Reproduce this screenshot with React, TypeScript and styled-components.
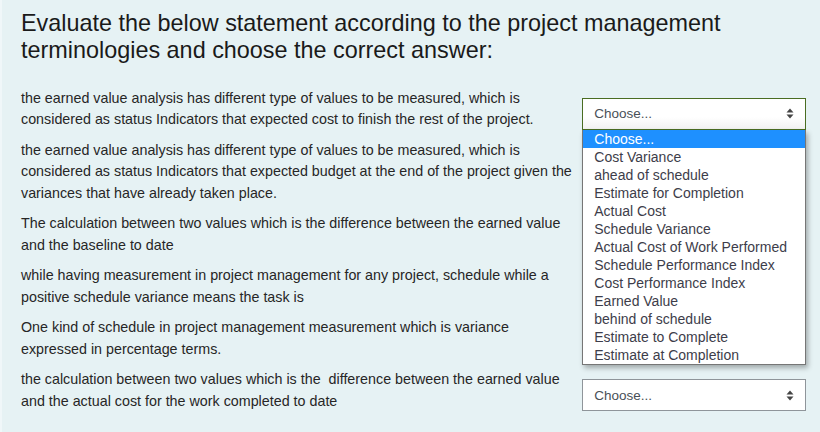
import React from 'react'
import styled, { createGlobalStyle } from 'styled-components'

const GlobalStyle = createGlobalStyle`
  html, body {
    margin: 0;
    padding: 0;
    background: #e6f2f4;
  }
  body {
    font-family: Arial, "Liberation Sans", Helvetica, sans-serif;
    color: #222;
  }
`

const Page = styled.div`
  width: 820px;
  height: 432px;
  box-sizing: border-box;
  padding: 9.5px 14px 0 19px;
  border-left: 2px solid #f0f7f9;
  overflow: hidden;
`

const Heading = styled.h2`
  margin: 0 0 24px 0;
  font-size: 23.4px;
  line-height: 27px;
  font-weight: 400;
  color: #1a1a1a;
`

const List = styled.div`
  display: flex;
  flex-direction: column;
`

const Row = styled.div`
  display: flex;
  align-items: center;
  margin-bottom: 9px;
`

const Statement = styled.div`
  width: 558px;
  margin-right: 4px;
  font-size: 14.3px;
  line-height: 21.5px;
  color: #262626;
`

const SelectWrap = styled.div`
  position: relative;
  width: 224px;
  margin-top: 9px;
`

const SelectBox = styled.div<{ $focused?: boolean }>`
  box-sizing: border-box;
  height: 32px;
  display: flex;
  align-items: center;
  justify-content: space-between;
  padding: 0 11px 0 11px;
  border: 1px solid ${(p) => (p.$focused ? '#4a6d22' : '#8f959a')};
  background: ${(p) =>
    p.$focused ? 'linear-gradient(#fff 60%, #f1f1f1)' : '#fff'};
  font-size: 13.5px;
  color: #495057;
`

const Arrows = () => (
  <svg width="8" height="11" viewBox="0 0 8 11">
    <path d="M4 0.5 L7.5 4.5 H0.5 Z" fill="#444" />
    <path d="M4 10.5 L7.5 6.5 H0.5 Z" fill="#444" />
  </svg>
)

const Dropdown = styled.ul`
  position: absolute;
  z-index: 5;
  top: 32px;
  left: 0;
  width: 224px;
  box-sizing: border-box;
  margin: 0;
  padding: 0;
  list-style: none;
  background: #fff;
  border: 1px solid #767676;
  border-top: 0;
  box-shadow: 2px 3px 5px rgba(0, 0, 0, 0.3);
`

const Option = styled.li<{ $active?: boolean }>`
  height: 18px;
  line-height: 18px;
  padding-left: 11px;
  font-size: 14px;
  white-space: nowrap;
  color: ${(p) => (p.$active ? '#fff' : '#3d3d4a')};
  background: ${(p) => (p.$active ? '#1e90ff' : 'transparent')};
`

const statements = [
  'the earned value analysis has different type of values to be measured, which is considered as status Indicators that expected cost to finish the rest of the project.',
  'the earned value analysis has different type of values to be measured, which is considered as status Indicators that expected budget at the end of the project given the variances that have already taken place.',
  'The calculation between two values which is the difference between the earned value and the baseline to date',
  'while having measurement in project management for any project, schedule while a positive schedule variance means the task is',
  'One kind of schedule in project management measurement which is variance expressed in percentage terms.',
  'the calculation between two values which is the \u00a0difference between the earned value and the actual cost for the work completed to date',
]

const options = [
  'Choose...',
  'Cost Variance',
  'ahead of schedule',
  'Estimate for Completion',
  'Actual Cost',
  'Schedule Variance',
  'Actual Cost of Work Performed',
  'Schedule Performance Index',
  'Cost Performance Index',
  'Earned Value',
  'behind of schedule',
  'Estimate to Complete',
  'Estimate at Completion',
]

export default function App() {
  return (
    <Page>
      <GlobalStyle />
      <Heading>
        Evaluate the below statement according to the project management
        terminologies and choose the correct answer:
      </Heading>
      <List>
        {statements.map((text, i) => (
          <Row key={i}>
            <Statement>{text}</Statement>
            <SelectWrap>
              <SelectBox $focused={i === 0}>
                <span>Choose...</span>
                <Arrows />
              </SelectBox>
              {i === 0 && (
                <Dropdown>
                  {options.map((o, j) => (
                    <Option key={o} $active={j === 0}>
                      {o}
                    </Option>
                  ))}
                </Dropdown>
              )}
            </SelectWrap>
          </Row>
        ))}
      </List>
    </Page>
  )
}
